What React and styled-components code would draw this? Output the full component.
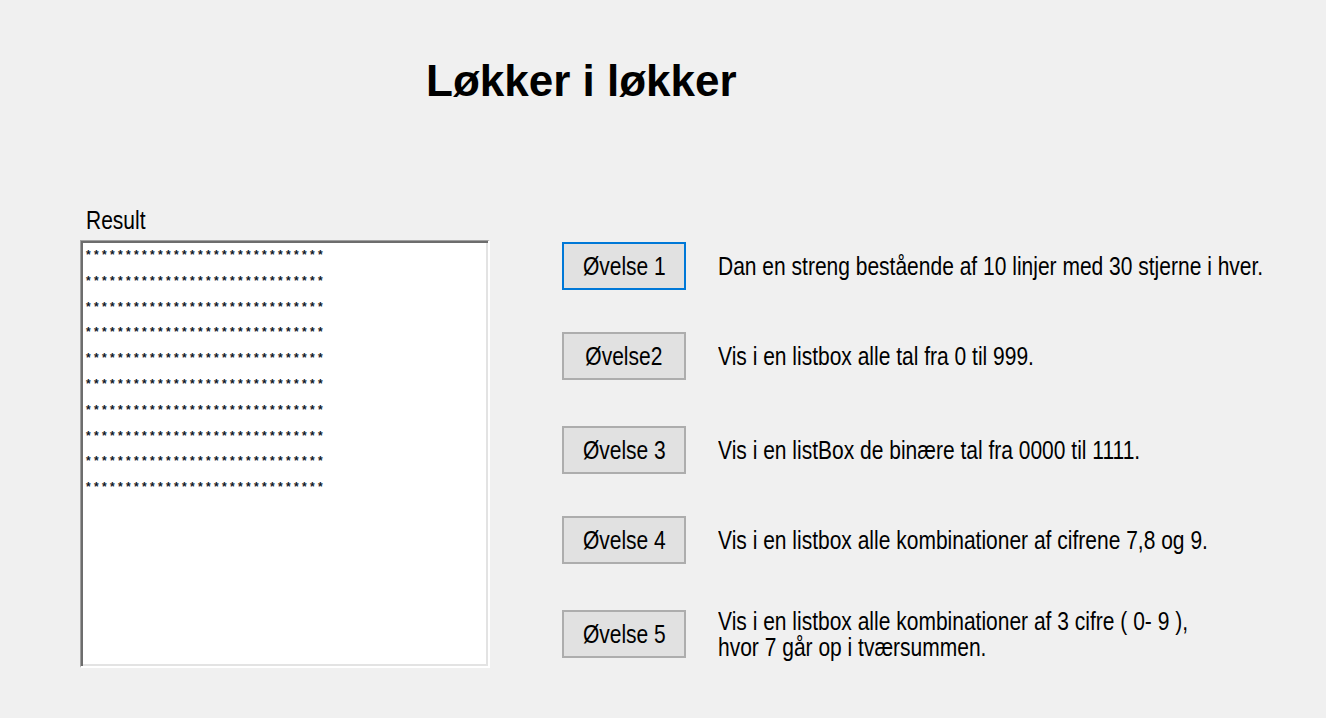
import { createGlobalStyle, styled } from 'styled-components';

const GlobalStyle = createGlobalStyle`
    html, body {
        margin: 0;
        padding: 0;
        background: #f0f0f0;
    }
    body {
        font-family: "Liberation Sans", Arial, sans-serif;
        color: #000;
    }
`;

const exercises = [
    { label: "Øvelse 1", text: ["Dan en streng bestående af 10 linjer med 30 stjerne i hver."], focused: true },
    { label: "Øvelse2", text: ["Vis i en listbox alle tal fra 0 til 999."] },
    { label: "Øvelse 3", text: ["Vis i en listBox de binære tal fra 0000 til 1111."] },
    { label: "Øvelse 4", text: ["Vis i en listbox alle kombinationer af cifrene 7,8 og 9."] },
    { label: "Øvelse 5", text: ["Vis i en listbox alle kombinationer af 3 cifre ( 0- 9 ),", "hvor 7 går op i tværsummen."] },
];

const rows = Array.from({ length: 10 }, () => "*".repeat(30));

const App = () => {
    return (
        <Form>
            <GlobalStyle />
            <Title>Løkker i løkker</Title>
            <Main>
                <ResultColumn>
                    <FieldLabel>
                        <Narrow>Result</Narrow>
                    </FieldLabel>
                    <ListBox>
                        {rows.map((row, i) => (
                            <ListItem key={i}>{row}</ListItem>
                        ))}
                    </ListBox>
                </ResultColumn>
                <ExerciseList>
                    {exercises.map((ex) => (
                        <ExerciseRow key={ex.label}>
                            <WinButton $focused={ex.focused}>
                                <Narrow $origin="center">{ex.label}</Narrow>
                            </WinButton>
                            <Description>
                                {ex.text.map((line) => (
                                    <Line key={line}>
                                        <Narrow>{line}</Narrow>
                                    </Line>
                                ))}
                            </Description>
                        </ExerciseRow>
                    ))}
                </ExerciseList>
            </Main>
        </Form>
    );
};

export default App;

const Form = styled.div`
    width: 1326px;
    height: 718px;
    padding-top: 56px;
    box-sizing: border-box;
    overflow: hidden;
`;

const Title = styled.h1`
    margin: 0 0 0 426px;
    font-size: 44px;
    font-weight: 700;
    line-height: 50px;
`;

// the form font is narrower than Arial, so squeeze it sideways
const Narrow = styled.span`
    display: inline-block;
    transform: scaleX(0.84);
    transform-origin: ${(p) => p.$origin || 'left'} center;
    white-space: nowrap;
`;

const Main = styled.div`
    display: flex;
    margin-top: 100px;
    padding-left: 80px;
`;

const ResultColumn = styled.div`
    display: flex;
    flex-direction: column;
`;

const FieldLabel = styled.div`
    padding-left: 6px;
    font-size: 25px;
    line-height: 28px;
`;

const ListBox = styled.div`
    box-sizing: border-box;
    width: 410px;
    height: 428px;
    margin-top: 6px;
    padding: 2px 2px 2px 5px;
    background: #fff;
    border-style: solid;
    border-width: 1px 2px 2px 1px;
    border-color: #a0a0a0 #fff #fff #a0a0a0;
    box-shadow: inset 2px 2px 0 #6d6d6d, inset -2px -2px 0 #e3e3e3;
`;

const ListItem = styled.div`
    box-sizing: border-box;
    height: 25.8px;
    padding-top: 6px;
    font-size: 12px;
    font-weight: 700;
    line-height: 12px;
    letter-spacing: 3.33px;
    color: #111827;
    white-space: nowrap;
`;

const ExerciseList = styled.div`
    display: flex;
    flex-direction: column;
    gap: 42px;
    margin-left: 72px;
    padding-top: 36px;
`;

const ExerciseRow = styled.div`
    display: flex;
    align-items: center;
    height: 48px;

    &:nth-child(odd):not(:first-child) {
        margin-top: 4px;
    }
`;

const WinButton = styled.button`
    box-sizing: border-box;
    display: flex;
    align-items: center;
    justify-content: center;
    width: 124px;
    height: 48px;
    padding: 0;
    flex-shrink: 0;
    background: #e1e1e1;
    border: 2px solid ${(p) => (p.$focused ? '#0078d7' : '#adadad')};
    font-family: "Liberation Sans", Arial, sans-serif;
    font-size: 25px;
    color: #000;
`;

const Description = styled.div`
    margin-left: 32px;
    font-size: 25px;
    line-height: 26px;
`;

const Line = styled.div`
    height: 26px;
`;
